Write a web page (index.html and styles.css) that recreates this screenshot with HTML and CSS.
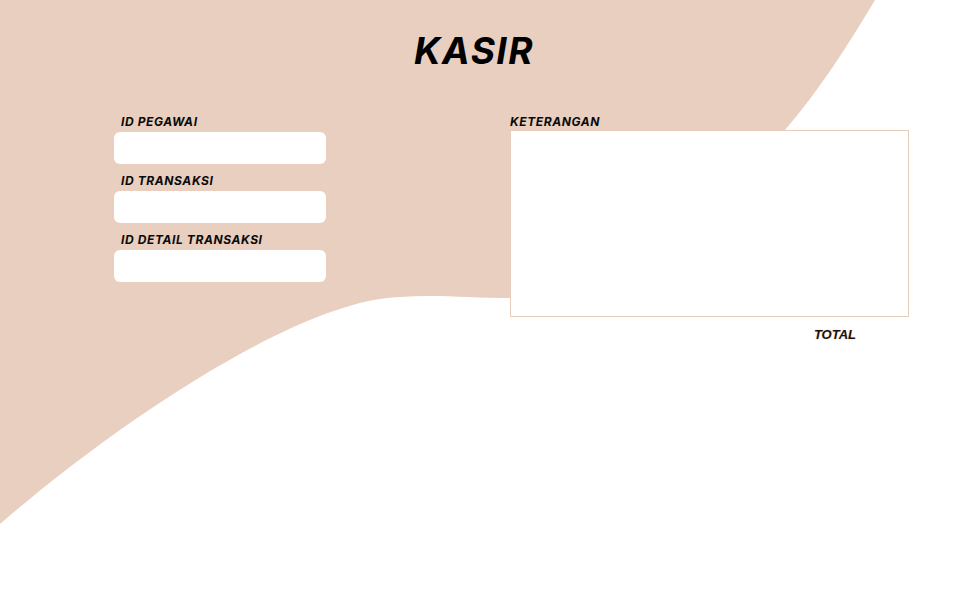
FILE: index.html
```html
<!DOCTYPE html>
<html lang="id">
<head>
<meta charset="utf-8">
<title>Kasir</title>
<link rel="stylesheet" href="styles.css">
</head>
<body>
<div class="page">
  <svg class="bg" width="960" height="600" viewBox="0 0 960 600" aria-hidden="true">
    <path d="M0,0 L875,0 C848,45 818,92 785,130 L700,200 L560,290 C545,296 525,298 510,298 C470,298 435,294 400,297 C300,300 120,420 0,524 Z" fill="#e9cfbf"/>
  </svg>
  <h1 class="title">KASIR</h1>
  <div class="form">
    <div class="col-left">
      <label class="field"><span class="label">ID PEGAWAI</span><input class="input" type="text"></label>
      <label class="field"><span class="label">ID TRANSAKSI</span><input class="input" type="text"></label>
      <label class="field"><span class="label">ID DETAIL TRANSAKSI</span><input class="input" type="text"></label>
    </div>
    <div class="col-right">
      <span class="label label-plain">KETERANGAN</span>
      <textarea class="notes"></textarea>
      <div class="total">TOTAL</div>
    </div>
  </div>
</div>
</body>
</html>
```
FILE: styles.css
```css
* { box-sizing: border-box; }
html, body { margin: 0; padding: 0; background: #ffffff; }
.page {
  position: relative;
  width: 960px;
  height: 600px;
  overflow: hidden;
  padding-top: 28px;
  font-family: Inter, "Liberation Sans", sans-serif;
}
.bg { position: absolute; left: 0; top: 0; z-index: 0; }
.title {
  position: relative;
  margin: 0;
  padding-right: 12px;
  text-align: center;
  font-size: 37px;
  line-height: 46px;
  font-weight: 700;
  font-style: italic;
  letter-spacing: 1.5px;
  color: #000;
}
.form {
  position: relative;
  display: flex;
  margin-top: 40px;
  padding-left: 114px;
}
.col-left {
  width: 212px;
  display: flex;
  flex-direction: column;
  gap: 9px;
}
.field { display: flex; flex-direction: column; gap: 2px; }
.label {
  display: block;
  padding-left: 7px;
  font-size: 12px;
  line-height: 16px;
  font-weight: 700;
  font-style: italic;
  letter-spacing: 0.6px;
  color: #0a0a0a;
}
.label-plain { padding-left: 0; }
.input {
  display: block;
  width: 212px;
  height: 32px;
  border: none;
  border-radius: 6px;
  background: #ffffff;
  outline: none;
}
.col-right {
  margin-left: 184px;
  width: 399px;
  display: flex;
  flex-direction: column;
}
.notes {
  display: block;
  width: 399px;
  height: 187px;
  margin: 0;
  border: 1px solid #e8cbb8;
  background: #ffffff;
  resize: none;
  outline: none;
}
.total {
  align-self: flex-end;
  margin-top: 10px;
  margin-right: 53px;
  font-family: "Liberation Sans", Arial, sans-serif;
  font-size: 13px;
  line-height: 15px;
  font-weight: 700;
  font-style: italic;
  color: #1c1008;
  text-shadow: 0 0 2px #e9cfbf;
}
```
